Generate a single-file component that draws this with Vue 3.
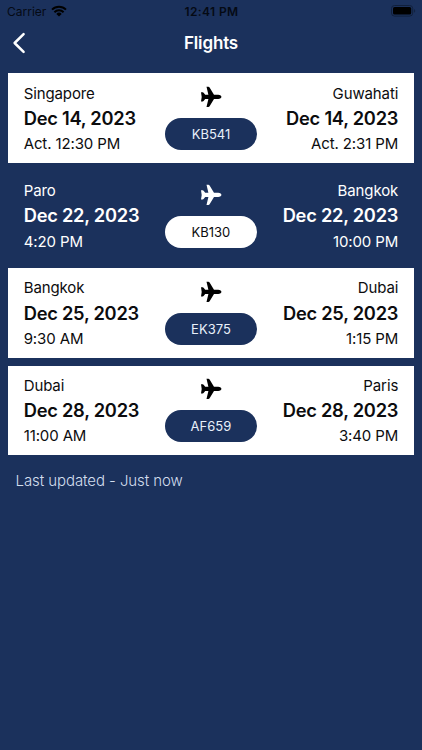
<script setup>
import { ref } from 'vue'

const flights = ref([
  {
    number: 'KB541',
    from: { city: 'Singapore', date: 'Dec 14, 2023', time: 'Act. 12:30 PM' },
    to: { city: 'Guwahati', date: 'Dec 14, 2023', time: 'Act. 2:31 PM' },
    active: false
  },
  {
    number: 'KB130',
    from: { city: 'Paro', date: 'Dec 22, 2023', time: '4:20 PM' },
    to: { city: 'Bangkok', date: 'Dec 22, 2023', time: '10:00 PM' },
    active: true
  },
  {
    number: 'EK375',
    from: { city: 'Bangkok', date: 'Dec 25, 2023', time: '9:30 AM' },
    to: { city: 'Dubai', date: 'Dec 25, 2023', time: '1:15 PM' },
    active: false
  },
  {
    number: 'AF659',
    from: { city: 'Dubai', date: 'Dec 28, 2023', time: '11:00 AM' },
    to: { city: 'Paris', date: 'Dec 28, 2023', time: '3:40 PM' },
    active: false
  }
])
</script>

<template>
  <div class="screen">
    <div class="status">
      <div class="status__left">
        <span>Carrier</span>
        <svg class="status__wifi" viewBox="0 0 16 12">
          <path d="M1 4.6a10 10 0 0 1 14 0" />
          <path d="M3.4 7.2a6.6 6.6 0 0 1 9.2 0" />
          <path class="status__dot" d="M8 11.6L5.3 8.9a3.9 3.9 0 0 1 5.4 0z" />
        </svg>
      </div>
      <div class="status__time">12:41 PM</div>
      <svg class="status__battery" viewBox="0 0 25 12">
        <rect class="status__case" x="0.5" y="0.5" width="21.2" height="10.6" rx="3" />
        <rect x="2" y="2" width="18.2" height="7.6" rx="1.6" />
        <path class="status__tip" d="M23.2 4v3.8c1.3-.6 1.3-3.2 0-3.8z" />
      </svg>
    </div>

    <header class="header">
      <svg class="header__back" viewBox="0 0 14 22">
        <path d="M11.6 2.2L2.6 11l9 8.8" />
      </svg>
      <h1>Flights</h1>
    </header>

    <main class="list">
      <article
        v-for="flight in flights"
        :key="flight.number"
        class="flight"
        :class="{ 'flight--active': flight.active }"
      >
        <div class="stop">
          <span>{{ flight.from.city }}</span>
          <strong>{{ flight.from.date }}</strong>
          <span>{{ flight.from.time }}</span>
        </div>
        <div class="flight__mid">
          <svg class="flight__plane" viewBox="0 0 22 22">
            <path
              d="M19.4 9.1c1.2.3 2 1 2 1.800s-.8 1.500-2 1.800c-.7.200-1.500.300-2.400.300h-3l-4.400 7.300c-.3.500-.7.800-1.300.8H6.500l1.900-8.100H5.200l-1.600 2c-.3.300-.5.500-.9.500H1l.7-4.600L1 6.300h1.700c.4 0 .6.200.9.500l1.600 2h3.200L6.500.7h1.800c.6 0 1 .300 1.300.8L14 8.800h3c.9 0 1.700.100 2.400.300z"
            />
          </svg>
          <div class="flight__number">{{ flight.number }}</div>
        </div>
        <div class="stop stop--end">
          <span>{{ flight.to.city }}</span>
          <strong>{{ flight.to.date }}</strong>
          <span>{{ flight.to.time }}</span>
        </div>
      </article>
    </main>

    <p class="updated">Last updated - Just now</p>
  </div>
</template>

<style>
body {
  background: #1b315c;
}
</style>

<style scoped>
.screen {
  box-sizing: border-box;
  height: 750px;
  overflow: hidden;
  background: #1b315c;
  color: #fff;
  font-family: Inter, 'Liberation Sans', sans-serif;
}

.status {
  display: grid;
  grid-template-columns: 1fr auto 1fr;
  align-items: center;
  height: 22px;
  padding: 0 6px 0 7px;
  color: #050a14;
  font-size: 12px;
}

.status__left {
  display: flex;
  align-items: center;
  gap: 5px;
}

.status__wifi {
  width: 16px;
  height: 12px;
  fill: none;
  stroke: #000;
  stroke-width: 2;
}

.status__dot {
  fill: #000;
  stroke: none;
}

.status__time {
  font-weight: 600;
  letter-spacing: 0.4px;
}

.status__battery {
  width: 25px;
  height: 12px;
  justify-self: end;
}

.status__case {
  fill: none;
  stroke: #11203c;
}

.status__tip {
  fill: #11203c;
}

.header {
  display: grid;
  grid-template-columns: 1fr auto 1fr;
  align-items: center;
  height: 42px;
  padding: 0 12px;
}

.header__back {
  width: 14px;
  height: 22px;
  fill: none;
  stroke: #fff;
  stroke-width: 2.5;
  stroke-linecap: round;
  stroke-linejoin: round;
}

.header h1 {
  margin: 0;
  font-size: 17px;
  font-weight: 600;
  letter-spacing: -0.15px;
}

.list {
  display: grid;
  gap: 7.8px;
  padding: 9.4px 8.5px 0 8.4px;
}

.flight {
  display: grid;
  grid-template-columns: 1fr 92px 1fr;
  box-sizing: border-box;
  height: 89.6px;
  padding: 7.3px 15.3px 0;
  background: #fff;
  color: #0c0c0e;
}

.flight--active {
  background: transparent;
  color: #fff;
}

.stop {
  display: flex;
  flex-direction: column;
  font-size: 15px;
  line-height: 25.3px;
  letter-spacing: -0.12px;
  white-space: nowrap;
}

.stop strong {
  font-size: 18.3px;
  font-weight: 600;
  letter-spacing: -0.25px;
}

.stop--end {
  align-items: flex-end;
}

.flight__mid {
  display: flex;
  flex-direction: column;
  align-items: center;
  gap: 10px;
  padding-top: 5.5px;
}

.flight__plane {
  width: 22px;
  height: 22px;
  fill: #000;
}

.flight__number {
  width: 91.5px;
  height: 32px;
  border-radius: 16px;
  background: #1b315c;
  color: #e8f0fa;
  font-size: 13px;
  line-height: 32px;
  text-align: center;
}

.flight--active .flight__plane {
  fill: #fff;
}

.flight--active .flight__number {
  background: #fff;
  color: #0c0c0e;
}

.updated {
  margin: 16px 0 0 15.5px;
  color: #d3deee;
  font-size: 15px;
  font-weight: 300;
  line-height: 20px;
  letter-spacing: -0.08px;
}
</style>
